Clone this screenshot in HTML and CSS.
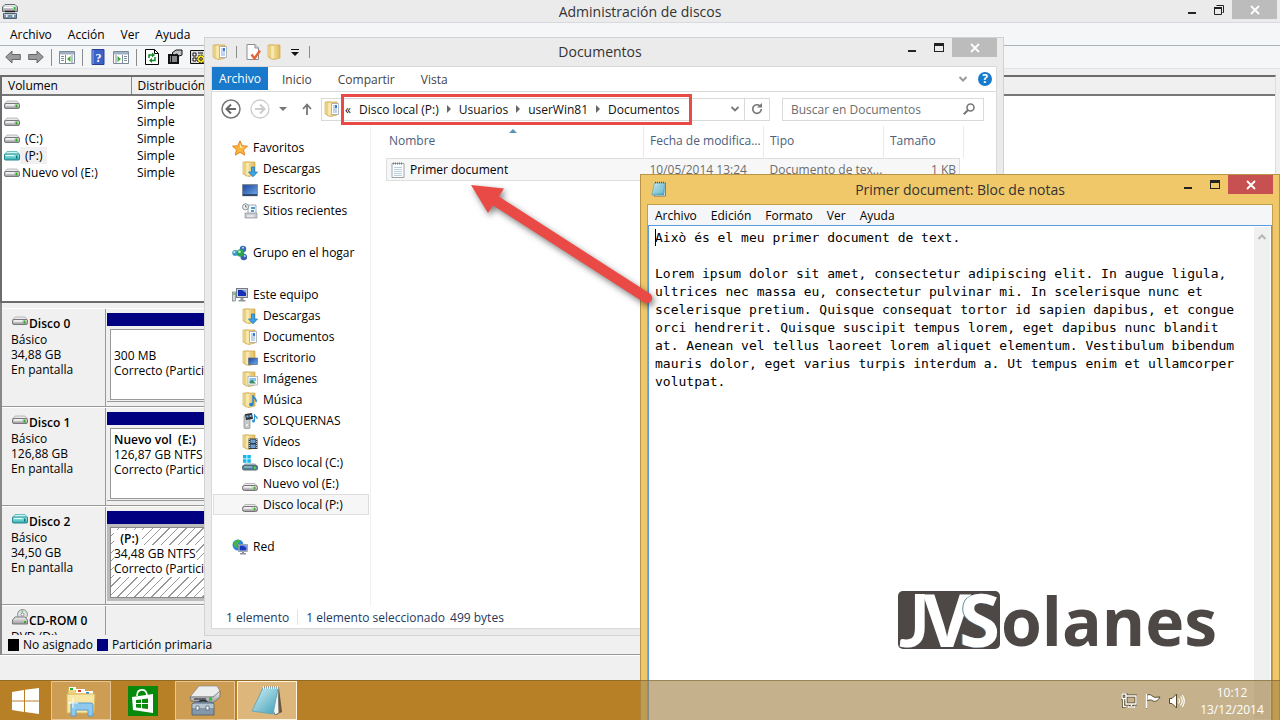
FILE: index.html
```html
<!DOCTYPE html>
<html lang="es">
<head>
<meta charset="utf-8">
<title>Administración de discos</title>
<link rel="stylesheet" href="styles.css">
</head>
<body>
<svg class="defs" aria-hidden="true">
  <defs>
    <linearGradient id="gFolder" x1="0" y1="0" x2="1" y2="0"><stop offset="0" stop-color="#f9ebaf"/><stop offset="1" stop-color="#e0bc5c"/></linearGradient>
    <linearGradient id="gMetal" x1="0" y1="0" x2="0" y2="1"><stop offset="0" stop-color="#f4f4f4"/><stop offset="1" stop-color="#9a9a9e"/></linearGradient>
    <linearGradient id="gTeal" x1="0" y1="0" x2="0" y2="1"><stop offset="0" stop-color="#a9f3f3"/><stop offset="1" stop-color="#35a9b0"/></linearGradient>
    <linearGradient id="gScreen" x1="0" y1="0" x2="1" y2="1"><stop offset="0" stop-color="#1d3f9b"/><stop offset="1" stop-color="#6fb0ee"/></linearGradient>
    <linearGradient id="gPad" x1="0" y1="0" x2="1" y2="1"><stop offset="0" stop-color="#d8f1f6"/><stop offset="1" stop-color="#3d9fb8"/></linearGradient>
    <symbol id="drive" viewBox="0 0 16 10"><path d="M3 1h10l2.500 3H.5z" fill="#e9e9eb" stroke="#a4a4a8" stroke-width=".7"/><rect x=".5" y="3.500" width="15" height="5" rx="1.500" fill="url(#gMetal)" stroke="#77777c"/><path d="M2 5h8" stroke="#fff"/><rect x="11.500" y="4.500" width="2" height="3" fill="#32b020"/></symbol>
    <symbol id="driveTeal" viewBox="0 0 16 10"><path d="M3 .5h10l2.500 3H.5z" fill="#c6f7f7" stroke="#3aa3a8" stroke-width=".7"/><rect x=".5" y="3" width="15" height="6" rx="1" fill="url(#gTeal)" stroke="#23878d"/><path d="M2 4.500h8" stroke="#dff"/><rect x="12" y="4.500" width="1.500" height="3" fill="#0c7a74"/></symbol>
    <symbol id="folder" viewBox="0 0 16 16"><path d="M1 1h6v14l-6-2z" fill="#f6e39b" stroke="#cfae58" stroke-width=".7"/><path d="M3 1h10v13l-6 1.500-4-1z" fill="url(#gFolder)" stroke="#cfa64b" stroke-width=".7"/><path d="M6 2v12" stroke="#fdf4c8"/></symbol>
    <symbol id="folderDoc" viewBox="0 0 16 16"><use href="#folder"/><path d="M7.500 2.500h7v11h-7z" fill="#fff" stroke="#a0a6ad" stroke-width=".8"/><path d="M9 5h4M9 7h4M9 9h4M9 11h4" stroke="#7fa9d8"/><rect x="11" y="4" width="2" height="3" fill="#3a7ed2"/></symbol>
    <symbol id="folderDown" viewBox="0 0 16 16"><use href="#folder"/><path d="M9.500 6h3v5h3L11 15.800 6.500 11h3z" fill="#39a5ea" stroke="#1c71b4" stroke-width=".7"/></symbol>
    <symbol id="folderDesk" viewBox="0 0 16 16"><use href="#folder"/><rect x="6.500" y="8" width="9" height="6.500" fill="url(#gScreen)" stroke="#5b6e85" stroke-width=".7"/></symbol>
    <symbol id="folderPic" viewBox="0 0 16 16"><use href="#folder"/><rect x="6" y="5.500" width="9.500" height="8.500" fill="#fff" stroke="#96a3ae" stroke-width=".7"/><path d="M7.500 7h6.500v3H7.500z" fill="#7cc2ee"/><path d="M7.500 10l3-1 3.500 3.500H7.500z" fill="#3a8b6b"/></symbol>
    <symbol id="folderMusic" viewBox="0 0 16 16"><use href="#folder"/><path d="M11 3v9M11 4c1 2.500 4 2.500 3 6" fill="none" stroke="#2186d2" stroke-width="1.500"/><ellipse cx="9.300" cy="12.500" rx="2.300" ry="1.800" fill="#2186d2"/></symbol>
    <symbol id="folderVideo" viewBox="0 0 16 16"><use href="#folder"/><rect x="6.500" y="4.500" width="9" height="10.500" fill="#303a44"/><path d="M8.500 5.500h5v3.500h-5zM8.500 10.500h5v3.500h-5z" fill="#6b9fd2"/><path d="M7.300 5v10M14.700 5v10" stroke="#dce3e8" stroke-dasharray="1 1"/></symbol>
    <symbol id="star" viewBox="0 0 16 16"><path d="M8 .8l2.200 4.900 5.300.5-4 3.600 1.200 5.300L8 12.400l-4.700 2.700 1.200-5.300-4-3.600 5.300-.5z" fill="#fbb53a" stroke="#e2852a"/><path d="M8 3.500l1.300 3.200 3 .3-4.300 1z" fill="#fff0a8"/></symbol>
    <symbol id="desk" viewBox="0 0 16 16"><rect x=".7" y="2.700" width="14.600" height="11" fill="url(#gScreen)" stroke="#6d7a88"/><path d="M1 13h14" stroke="#25344e" stroke-width="1.500"/></symbol>
    <symbol id="recent" viewBox="0 0 16 16"><path d="M6 2h8v10H6z" fill="#f6f8fa" stroke="#8d979f" stroke-width=".8"/><path d="M9 5h4M9 8h3" stroke="#4f9bd8" stroke-width="2"/><path d="M3 10h12v5H3z" fill="#c6cace" stroke="#8f979d" stroke-width=".7"/><path d="M5 13h7" stroke="#fff"/><circle cx="3.500" cy="3.800" r="3" fill="#eef3f5" stroke="#87939b"/><path d="M3.500 2v2H5" fill="none" stroke="#53626c" stroke-width=".8"/></symbol>
    <symbol id="group" viewBox="0 0 16 16"><circle cx="11" cy="4" r="3.200" fill="#376bb9"/><circle cx="3.200" cy="8" r="3" fill="#3d9bd0"/><circle cx="11.800" cy="12" r="3.300" fill="#3a5cb6"/><circle cx="8.500" cy="8" r="3.800" fill="#2aa450"/><circle cx="7.500" cy="6.700" r="1.300" fill="#c6f2ba"/><circle cx="11" cy="2.700" r="1" fill="#bdd8f8"/><circle cx="12.800" cy="11" r="1" fill="#cbd9fb"/><circle cx="2.400" cy="7" r="1" fill="#d4f2fb"/></symbol>
    <symbol id="pc" viewBox="0 0 16 16"><rect x=".5" y="5" width="3" height="9" fill="#d5d8db" stroke="#74797f" stroke-width=".7"/><rect x="1.500" y="6" width="1" height="2" fill="#25ab3c"/><rect x="4.500" y="1.500" width="11" height="9" fill="#c9ccd2" stroke="#777d86"/><rect x="6" y="3" width="8" height="6" fill="#172fb4"/><path d="M10 3h4v3z" fill="#79a4f5"/><path d="M8.500 11h3v2h2v1.500h-7V13h2z" fill="#92979d"/></symbol>
    <symbol id="net" viewBox="0 0 16 16"><circle cx="6" cy="6" r="5.500" fill="#2c87dd"/><path d="M2 3c2-2.500 5-3 6-1L6 5 5 9 2 7zM7 7l4-2v3z" fill="#42b54c"/><rect x="6.500" y="5.500" width="9" height="7" fill="#d2d7dc" stroke="#858c94" stroke-width=".7"/><rect x="7.500" y="6.500" width="7" height="5" fill="#1737bd"/><path d="M11 6.500h3.500V9z" fill="#729cf6"/><path d="M10 13h2v1h2v1.500H8V14h2z" fill="#8b9299"/></symbol>
    <symbol id="media" viewBox="0 0 16 16"><rect x="2" y="2" width="6" height="13.500" rx="1" fill="#c6c9cc" stroke="#85898d" stroke-width=".7"/><path d="M3 1l7-1 1 6-7 1z" fill="#2f353d"/><path d="M4.500 2.500h2v2h-2zM7.500 2h2v2h-2z" fill="#84b5e0"/><path d="M12.500 1v7M12.500 2c1 2 3 1.500 2.500 4" fill="none" stroke="#2b93d6" stroke-width="1.200"/><circle cx="11.500" cy="8" r="1.500" fill="#2b93d6"/><circle cx="5" cy="12" r="1" fill="#f8f8f8"/></symbol>
    <symbol id="drv" viewBox="0 0 16 16"><path d="M3 7.500h10l2.500 3H.5z" fill="#ececee" stroke="#a0a0a4" stroke-width=".7"/><rect x=".5" y="9.500" width="15" height="5" rx="2" fill="url(#gMetal)" stroke="#727277"/><path d="M2.500 11h7" stroke="#fff"/><rect x="11.800" y="10.700" width="1.600" height="2.600" fill="#32b020"/></symbol>
    <symbol id="drvWin" viewBox="0 0 16 16"><path d="M1 0h3.500v3.500H1zM5.300 0h3.500v3.500H5.300zM1 4.300h3.500v3.500H1zM5.300 4.300h3.500v3.500H5.300z" fill="#12b9ee"/><path d="M3 8.500h10l2.500 2.500H.5z" fill="#8fa9ba"/><rect x=".5" y="10.500" width="15" height="4.500" rx="1.500" fill="#4e8198" stroke="#5b6770"/><path d="M2 12h8" stroke="#b7d5e2"/><rect x="12" y="11.500" width="1.600" height="2.500" fill="#4be34c"/></symbol>
    <symbol id="pad" viewBox="0 0 16 16"><path d="M14.500 1.500V15H3z" fill="#fff" stroke="#5d6366" stroke-width=".8"/><path d="M3.500 2H14L13 14H.8z" fill="url(#gPad)" stroke="#5d9cab" stroke-width=".6"/><path d="M3 7h9M2.500 9h9.500M2 11h10" stroke="#a8dbe6" stroke-width=".7"/><path d="M4 1.500h10" stroke="#4a5457" stroke-width="1.500" stroke-dasharray="1 1"/></symbol>
    <symbol id="txt" viewBox="0 0 16 16"><path d="M2 1.500h12v14H2z" fill="#fbfdfe" stroke="#909ca3" stroke-width=".9"/><path d="M4 5.500h8M4 7.500h8M4 9.500h8M4 11.500h8M4 13.500h8" stroke="#a9c3d0" stroke-width=".8"/><path d="M3 1.500h10" stroke="#6c7a82" stroke-width="2" stroke-dasharray="1 1"/></symbol>
    <symbol id="diskmgr" viewBox="0 0 32 32"><path d="M10 1h18l3 5-6 6H1z" fill="#eceded" stroke="#85878b" stroke-width=".7"/><path d="M1 12l23 0 7-6v6l-7 6-22-2z" fill="url(#gMetal)" stroke="#606368" stroke-width=".7"/><path d="M5 14h12" stroke="#4b4e53" stroke-width="1.500"/><path d="M20 12.500h3v3h-3z" fill="#1ec92c"/><path d="M9 20c1-6 9-6 10 0" fill="none" stroke="#2d343c" stroke-width="2"/><path d="M3 19l3-2h16l3 2v11H3z" fill="#8598ab" stroke="#4b5b6b" stroke-width=".8"/><path d="M3.500 19h21v4h-21z" fill="#b7c5d1"/><path d="M7 21h3v4H7zM17 21h3v4h-3z" fill="#f2f5f7" stroke="#4b5b6b" stroke-width=".7"/></symbol>
    <symbol id="diskmgrSmall" viewBox="0 0 16 16"><path d="M3 1.500h10l2.500 2.500v4.500H.5V4z" fill="url(#gMetal)" stroke="#66696e"/><path d="M2 4.500h9" stroke="#fff"/><path d="M12 4h1.500v2.500H12z" fill="#1ec92c"/><path d="M3 8.500h10" stroke="#222" stroke-width="1.500"/><path d="M1.500 10.500h13v5h-13z" fill="#7890a6" stroke="#4c6072"/><path d="M2 11.500h12" stroke="#becbd6"/><path d="M4 12h1.500v2H4zM10.500 12H12v2h-1.500z" fill="#fff"/></symbol>
    <symbol id="cross" viewBox="0 0 10 10"><path d="M1 1l8 8M9 1l-8 8" stroke="#fff" stroke-width="1.800"/></symbol>
    <symbol id="min" viewBox="0 0 10 10"><path d="M1 7h8v2H1z" fill="#222"/></symbol>
    <symbol id="max" viewBox="0 0 10 10"><path d="M0 0h10v9H0zM1 3v5h8V3z" fill="#222" fill-rule="evenodd"/></symbol>
    <symbol id="restore" viewBox="0 0 10 10"><path d="M2.500 .5h7v7H8.500M.5 2.500h7v7h-7z" fill="none" stroke="#222"/><path d="M0 3h8" stroke="#222" stroke-width="2"/></symbol>
    <symbol id="crumb" viewBox="0 0 6 8"><path d="M1 0l4 4-4 4z" fill="#666"/></symbol>
  </defs>
</svg>

<main class="desktop">
  <section class="disks" aria-label="Administración de discos">
    <header class="titlebar">
      <svg class="app"><use href="#diskmgrSmall"/></svg>
      <h1>Administración de discos</h1>
      <div class="caps">
        <button aria-label="Minimizar"><svg><use href="#min"/></svg></button><button aria-label="Restaurar"><svg><use href="#restore"/></svg></button><button class="close" aria-label="Cerrar"><svg><use href="#cross"/></svg></button>
      </div>
    </header>
    <nav class="menu wide"><button>Archivo</button><button>Acción</button><button>Ver</button><button>Ayuda</button></nav>
    <div class="toolbar">
      <button aria-label="Atrás"><svg viewBox="0 0 16 16"><path d="M.7 8L7 2v3.500h8.300v5H7V14z" fill="#9b9b9b" stroke="#666"/></svg></button>
      <button aria-label="Adelante"><svg viewBox="0 0 16 16"><path d="M15.300 8L9 2v3.500H.7v5H9V14z" fill="#9b9b9b" stroke="#666"/></svg></button>
      <i class="rule"></i>
      <button aria-label="Árbol de consola"><svg viewBox="0 0 16 16"><path d="M.5 2.500h15v12H.5z" fill="#fff" stroke="#7d8b99"/><path d="M1 3h14v2.500H1z" fill="#9fb0c2"/><path d="M2 7.500h3M2 9.500h3M2 11.500h3M6.500 6v8M13 6v8" stroke="#7d8b99"/><path d="M11.500 7v6L8 10z" fill="#3cab32"/></svg></button>
      <i class="rule"></i>
      <button aria-label="Ayuda"><svg viewBox="0 0 16 16"><path d="M2 .5h12v15H2z" fill="#3c62c8" stroke="#2a3f91"/><path d="M3 1v14" stroke="#8fa9ef"/><text x="8.500" y="13" text-anchor="middle" class="qmark">?</text></svg></button>
      <button aria-label="Panel de acciones"><svg viewBox="0 0 16 16"><path d="M.5 2.500h15v12H.5z" fill="#fff" stroke="#7d8b99"/><path d="M1 3h14v2.500H1z" fill="#9fb0c2"/><path d="M11 7.500h3M11 9.500h3M11 11.500h3M9.500 6v8M3 6v8" stroke="#7d8b99"/><path d="M4.500 7v6L8 10z" fill="#3cab32"/></svg></button>
      <i class="rule"></i>
      <button aria-label="Actualizar"><svg viewBox="0 0 16 16"><path d="M1.500.5h9l4 4v11h-13z" fill="#fff" stroke="#000"/><path d="M10.500.5v4h4" fill="none" stroke="#000"/><path d="M5 9V6h4M11 8v3.500H7" fill="none" stroke="#12882a" stroke-width="1.500"/><path d="M8 3.500L11 6 8 8.500zM8 9l-3 2.500L8 14z" fill="#12882a"/></svg></button>
      <button aria-label="Propiedades"><svg viewBox="0 0 16 16"><path d="M1 5h11v10H1z" fill="#111"/><path d="M3 8h1M5 8h5M3 10h1M5 10h5M3 12h1M5 12h5" stroke="#fff"/><path d="M5 4l4-3h6v5l-3 1-2-2-3 1z" fill="#c3c3c3" stroke="#111"/></svg></button>
      <button aria-label="Configuración"><svg viewBox="0 0 16 16"><path d="M.5 1.500h15v13H.5z" fill="#ddd" stroke="#111"/><path d="M3 4h3v3H3zM3 9h3v3H3zM8 4h5" fill="#fff" stroke="#111"/><circle cx="11" cy="10" r="4" fill="#f4df19" stroke="#111" stroke-dasharray="2 1"/><circle cx="11" cy="10" r="1.300" fill="#fff" stroke="#111"/></svg></button>
    </div>
    <div class="volumes">
      <table>
        <thead><tr><th class="vname">Volumen</th><th>Distribución</th></tr></thead>
        <tbody>
          <tr><td><svg><use href="#drive"/></svg></td><td>Simple</td></tr>
          <tr><td><svg><use href="#drive"/></svg></td><td>Simple</td></tr>
          <tr><td><svg><use href="#drive"/></svg><span>(C:)</span></td><td>Simple</td></tr>
          <tr><td><svg><use href="#driveTeal"/></svg><span class="picked">(P:)</span></td><td>Simple</td></tr>
          <tr><td><svg><use href="#drive"/></svg><b>Nuevo vol (E:)</b></td><td>Simple</td></tr>
        </tbody>
      </table>
    </div>
    <div class="map">
      <article class="disk">
        <div class="info"><h2><svg><use href="#drive"/></svg>Disco 0</h2><p>Básico</p><p>34,88 GB</p><p>En pantalla</p></div>
        <div class="parts"><div class="part"><p>&nbsp;</p><p>300 MB</p><p>Correcto (Partición primaria)</p></div></div>
      </article>
      <article class="disk">
        <div class="info"><h2><svg><use href="#drive"/></svg>Disco 1</h2><p>Básico</p><p>126,88 GB</p><p>En pantalla</p></div>
        <div class="parts"><div class="part"><p><strong>Nuevo vol &nbsp;(E:)</strong></p><p>126,87 GB NTFS</p><p>Correcto (Partición primaria)</p></div></div>
      </article>
      <article class="disk">
        <div class="info"><h2><svg><use href="#driveTeal"/></svg>Disco 2</h2><p>Básico</p><p>34,50 GB</p><p>En pantalla</p></div>
        <div class="parts"><div class="part hatched"><p><strong>&nbsp; (P:)&nbsp;</strong></p><p><span>34,48 GB NTFS</span></p><p><span>Correcto (Partición primaria)</span></p></div></div>
      </article>
      <article class="disk cd">
        <div class="info"><h2><svg class="cdicon" viewBox="0 0 16 16"><circle cx="10.500" cy="5.500" r="5" fill="#dcdfe1" stroke="#8e9194"/><path d="M10.500 5.500l-2-4.500h3z" fill="#8ed18b"/><circle cx="10.500" cy="5.500" r="1.400" fill="#fff" stroke="#8e9194"/><path d="M3 8h10l2.500 3v4H.5v-4z" fill="url(#gMetal)" stroke="#77777c"/><path d="M12 12h2v2h-2z" fill="#32b020"/></svg>CD-ROM 0</h2><p>DVD (D:)</p></div>
        <div class="blank"></div>
      </article>
    </div>
    <div class="legend"><i class="black"></i><span>No asignado</span><i class="navy"></i><span>Partición primaria</span></div>
    <footer class="diskstatus"></footer>
  </section>

  <section class="explorer" aria-label="Documentos">
    <header class="titlebar">
      <div class="quick">
        <svg><use href="#folderDoc"/></svg><i class="rule"></i>
        <button aria-label="Propiedades"><svg viewBox="0 0 16 16"><path d="M2 .5h8l3.500 3.500v11.500H2z" fill="#fff" stroke="#8a8f94"/><path d="M10 .5V4h3.500" fill="#d9dcde" stroke="#8a8f94"/><path d="M6.500 10.500l3 4 5.500-8" fill="none" stroke="#e4673a" stroke-width="2.500"/></svg></button>
        <button aria-label="Nueva carpeta"><svg><use href="#folder"/></svg></button>
        <button aria-label="Personalizar" class="drop"><svg viewBox="0 0 8 8"><path d="M0 1.500h8" stroke="#111"/><path d="M0 4h8L4 8z" fill="#111"/></svg></button>
        <i class="rule"></i>
      </div>
      <h1>Documentos</h1>
      <div class="caps">
        <button aria-label="Minimizar"><svg><use href="#min"/></svg></button><button aria-label="Maximizar"><svg><use href="#max"/></svg></button><button class="close" aria-label="Cerrar"><svg><use href="#cross"/></svg></button>
      </div>
    </header>
    <div class="frame">
      <nav class="ribbon">
        <button class="file">Archivo</button><button>Inicio</button><button>Compartir</button><button>Vista</button>
        <span class="grow"></span>
        <svg class="chev" viewBox="0 0 10 8"><path d="M1.500 2L5 5.500 8.500 2" fill="none" stroke="#9a9a9a" stroke-width="2"/></svg>
        <button class="help" aria-label="Ayuda">?</button>
      </nav>
      <div class="address">
        <div class="go">
          <button aria-label="Atrás"><svg viewBox="0 0 20 20"><circle cx="10" cy="10" r="9" fill="none" stroke="#777" stroke-width="1.500"/><path d="M15 10H6M10 5.500L5.500 10l4.500 4.500" fill="none" stroke="#666" stroke-width="2"/></svg></button>
          <button aria-label="Adelante"><svg viewBox="0 0 20 20"><circle cx="10" cy="10" r="9" fill="none" stroke="#ccc" stroke-width="1.300"/><path d="M5 10h9M10 5.500l4.500 4.500-4.500 4.500" fill="none" stroke="#ccc" stroke-width="2"/></svg></button>
          <button aria-label="Recientes"><svg class="s8" viewBox="0 0 8 8"><path d="M0 2h8L4 6z" fill="#777"/></svg></button>
          <button aria-label="Subir"><svg class="s12" viewBox="0 0 12 12"><path d="M6 12V2M2 6l4-4.500L10 6" fill="none" stroke="#777" stroke-width="1.800"/></svg></button>
        </div>
        <div class="path">
          <svg class="s16"><use href="#folderDoc"/></svg>
          <div class="crumbs">
            <span class="more">«</span>
            <button>Disco local (P:)</button><svg><use href="#crumb"/></svg>
            <button>Usuarios</button><svg><use href="#crumb"/></svg>
            <button>userWin81</button><svg><use href="#crumb"/></svg>
            <button>Documentos</button>
            <i class="mark"></i>
          </div>
          <span class="grow"></span>
          <svg class="s10" viewBox="0 0 10 8"><path d="M1.500 2L5 5.500 8.500 2" fill="none" stroke="#777" stroke-width="1.800"/></svg>
          <button class="reload" aria-label="Actualizar"><svg viewBox="0 0 12 12"><path d="M9 3a4.300 4.300 0 1 0 1.300 3" fill="none" stroke="#777" stroke-width="1.600"/><path d="M6 4.500h5v-4.500z" fill="#777"/></svg></button>
        </div>
        <label class="search"><input type="text" placeholder="Buscar en Documentos" aria-label="Buscar en Documentos"><svg viewBox="0 0 12 12"><circle cx="7.500" cy="4.500" r="3.500" fill="none" stroke="#777" stroke-width="1.600"/><path d="M5 7L.8 11.200" stroke="#777" stroke-width="2"/></svg></label>
      </div>
      <div class="panes">
        <ul class="tree">
          <li class="top"><svg><use href="#star"/></svg>Favoritos</li>
          <li><svg><use href="#folderDown"/></svg>Descargas</li>
          <li><svg><use href="#desk"/></svg>Escritorio</li>
          <li><svg><use href="#recent"/></svg>Sitios recientes</li>
          <li class="top gap"><svg><use href="#group"/></svg>Grupo en el hogar</li>
          <li class="top gap"><svg><use href="#pc"/></svg>Este equipo</li>
          <li><svg><use href="#folderDown"/></svg>Descargas</li>
          <li><svg><use href="#folderDoc"/></svg>Documentos</li>
          <li><svg><use href="#folderDesk"/></svg>Escritorio</li>
          <li><svg><use href="#folderPic"/></svg>Imágenes</li>
          <li><svg><use href="#folderMusic"/></svg>Música</li>
          <li><svg><use href="#media"/></svg>SOLQUERNAS</li>
          <li><svg><use href="#folderVideo"/></svg>Vídeos</li>
          <li><svg><use href="#drvWin"/></svg>Disco local (C:)</li>
          <li><svg><use href="#drv"/></svg>Nuevo vol (E:)</li>
          <li class="current"><svg><use href="#drv"/></svg>Disco local (P:)</li>
          <li class="top gap"><svg><use href="#net"/></svg>Red</li>
        </ul>
        <div class="files">
          <svg class="sort" viewBox="0 0 8 4"><path d="M4 0l4 4H0z" fill="#5a93b5"/></svg>
          <table>
            <thead><tr><th class="c1">Nombre</th><th class="c2">Fecha de modifica...</th><th class="c3">Tipo</th><th class="c4">Tamaño</th></tr></thead>
            <tbody><tr><td class="fname"><svg><use href="#txt"/></svg>Primer document</td><td>10/05/2014 13:24</td><td>Documento de tex...</td><td class="size">1 KB</td></tr></tbody>
          </table>
        </div>
      </div>
      <footer class="count"><span>1 elemento</span><span>1 elemento seleccionado</span><span>499 bytes</span></footer>
    </div>
  </section>

  <section class="notepad" aria-label="Bloc de notas">
    <header class="titlebar">
      <svg class="app"><use href="#pad"/></svg>
      <h1>Primer document: Bloc de notas</h1>
      <div class="caps">
        <button aria-label="Minimizar"><svg><use href="#min"/></svg></button><button aria-label="Maximizar"><svg><use href="#max"/></svg></button><button class="close" aria-label="Cerrar"><svg><use href="#cross"/></svg></button>
      </div>
    </header>
    <div class="sheet">
      <nav class="menu"><button>Archivo</button><button>Edición</button><button>Formato</button><button>Ver</button><button>Ayuda</button></nav>
      <div class="edit">
        <textarea aria-label="Texto" spellcheck="false">Això és el meu primer document de text.

Lorem ipsum dolor sit amet, consectetur adipiscing elit. In augue ligula,
ultrices nec massa eu, consectetur pulvinar mi. In scelerisque nunc et
scelerisque pretium. Quisque consequat tortor id sapien dapibus, et congue
orci hendrerit. Quisque suscipit tempus lorem, eget dapibus nunc blandit
at. Aenean vel tellus laoreet lorem aliquet elementum. Vestibulum bibendum
mauris dolor, eget varius turpis interdum a. Ut tempus enim et ullamcorper
volutpat.</textarea>
        <i class="cursor"></i>
        <div class="bar"><svg viewBox="0 0 10 8"><path d="M1.500 6L5 2.500 8.500 6" fill="none" stroke="#b5b5b5" stroke-width="2"/></svg></div>
      </div>
    </div>
  </section>

  <svg class="arrow" viewBox="0 0 190 130" aria-hidden="true"><g fill="#ea4a45"><path d="M6 10l33 3.500-16 24.500z"/><path d="M31 26l151 97" stroke="#ea4a45" stroke-width="10.500" stroke-linecap="round"/></g></svg>

  <div class="logo"><span class="badge"><span class="j">J</span><span class="v">V</span><span class="s">S</span></span><span>olanes</span></div>

  <footer class="taskbar">
    <button class="start" aria-label="Inicio"><svg viewBox="0 0 28 26"><path d="M0 4l12-2v10.500H0zM13 1.800L27 0v12.500H13zM0 13.500h12V24L0 22zM13 13.500h14V26l-14-2z" fill="#fff"/></svg></button>
    <button class="task open" aria-label="Explorador"><svg viewBox="0 0 32 32"><path d="M3 4h8v3h16l1 20H2z" fill="#f0d683" stroke="#c9a651"/><path d="M4 2h7v3H4z" fill="#fff"/><path d="M5 3h3v2H5z" fill="#28ad37"/><path d="M11 4h9v4h-9z" fill="#fff"/><path d="M13 5h3v2h-3z" fill="#d7412c"/><path d="M20 6h8v4h-8z" fill="#fff"/><path d="M21 7h3v2h-3z" fill="#3588da"/><path d="M2 9h28l-1 19H2z" fill="#f8e7a4" stroke="#d8b55d"/><path d="M6 31V20q0-2 2-2h18q2 0 2 2v11h-5v-6H11v6z" fill="#8fc9ee" stroke="#5b9dcb"/><path d="M8 13v10M3 18h10" stroke="#fff" stroke-width="1"/></svg></button>
    <button class="task" aria-label="Tienda"><svg viewBox="0 0 32 32"><path d="M1 1h30v30H1z" fill="#078a0b"/><path d="M5 12l21-3v19L6 25z" fill="#fff"/><path d="M10 11c0-8 9-8 10-1" fill="none" stroke="#fff" stroke-width="1.600"/><path d="M9 15l5-.6V18H9zM15 14.200l6-.7V18h-6zM9 19h5v4l-5-.6zM15 19h6v5l-6-.8z" fill="#078a0b"/></svg></button>
    <button class="task open" aria-label="Administración de discos"><svg><use href="#diskmgr"/></svg></button>
    <button class="task open active" aria-label="Bloc de notas"><svg viewBox="0 0 32 32"><path d="M28 3l3 24-6 3z" fill="#6c5537"/><path d="M13 2h14l1 26-4 2z" fill="#f5f5f2" stroke="#777"/><path d="M12 3h15l-5 26-21-3z" fill="url(#gPad)" stroke="#6ba7b4"/><path d="M12 2.500h16" stroke="#e9f2f3" stroke-width="3" stroke-dasharray="1 1"/></svg></button>
    <span class="grow"></span>
    <div class="tray">
      <svg viewBox="0 0 16 16"><path d="M5 3h10v8H5zM8 13.500h5M10.500 11v2M2.500 6v7.500H5M1 1h4v4.500H1z" fill="none" stroke="#554a2c" stroke-width="3"/><path d="M5 3h10v8H5zM7 14h7M10.500 11v2M2.500 6v7.500H5M1 1h4v4.500H1z" fill="none" stroke="#fff" stroke-width="1.400"/></svg>
      <svg viewBox="0 0 16 16"><path d="M1.500 1v14.500M2 2c3-1 4 0 6 1.500 2 1.500 4 .5 7 .5-2 4-5 5-7 4-2-1.500-3-1-6-.5z" fill="#fff" stroke="#554a2c" stroke-width="1"/><path d="M1.500 1v14" stroke="#fff" stroke-width="1.300"/></svg>
      <svg viewBox="0 0 16 16"><path d="M.5 5.500H3L7.500 1v14L3 10.500H.5z" fill="#fff" stroke="#554a2c"/><path d="M9.500 5.500q2 2.500 0 5M11.500 3.500q3.500 4.500 0 9M13.300 2q4 6 0 12" fill="none" stroke="#fff" stroke-width="1.200"/></svg>
    </div>
    <time class="clock">10:12<br>13/12/2014</time>
  </footer>
</main>
</body>
</html>
```
FILE: styles.css
```css
* { box-sizing: border-box; }
body { margin: 0; font: 12px/15px "Open Sans", "Noto Sans", sans-serif; color: #000; }
h1, h2, p, ul { margin: 0; padding: 0; }
button { font: inherit; color: inherit; background: none; border: 0; padding: 0; white-space: nowrap; }
svg { display: block; flex: none; width: 16px; height: 16px; }
table { border-collapse: collapse; table-layout: fixed; }
th { font-weight: 400; text-align: left; }
th, td { padding: 0; white-space: nowrap; }
.defs { position: absolute; width: 0; height: 0; }
.grow { flex: 1; }
.desktop { position: relative; height: 100vh; min-height: 640px; overflow: hidden; background: #df8200; }

/* Shared window parts */
.titlebar { position: relative; display: flex; align-items: flex-start; justify-content: space-between; background: #ebebeb; }
.titlebar h1 { position: absolute; inset: 0 0 auto; text-align: center; font-size: 14px; line-height: 24px; font-weight: 400; color: #333; pointer-events: none; }
.caps { display: flex; margin-left: auto; }
.caps button { display: flex; align-items: center; justify-content: center; width: 27px; height: 19px; padding-top: 1px; }
.caps svg { width: 10px; height: 10px; }
.caps .close { width: 45px; background: #bcbcbc; }
.menu { display: flex; gap: 14px; padding: 0 7px; height: 19px; align-items: center; background: #f5f6f8; }
.menu.wide { height: 23px; gap: 16px; padding: 0 10px; border-bottom: 1px solid #aab0ba; }
.rule { width: 1px; height: 17px; background: #8c8c8c; }

/* Disk management */
.disks { position: absolute; inset: 0 0 40px; display: flex; flex-direction: column; background: #f0f0f0; }
.disks .titlebar { height: 23px; border-bottom: 1px solid #d8dadf; padding: 0 3px 0 2px; }
.disks .app { margin-top: 3px; }
.toolbar { display: flex; align-items: center; gap: 7px; height: 23px; padding: 0 5px; background: #f5f6f8; border-bottom: 1px solid #e2e4e8; }
.volumes { flex: 0 0 228px; margin: 6px 4px 0 0; border: 2px solid #6c6c6c; border-right: 1px solid #ddd; background: #fff; }
.volumes table { width: 100%; }
.volumes th { height: 18px; padding-left: 6px; background: #f0f0f0; border-bottom: 2px solid #777; }
.volumes .vname { width: 129px; border-right: 1px solid #888; }
.volumes td { height: 17px; padding-left: 6px; }
.volumes td:first-child { display: flex; align-items: center; padding-left: 2px; }
.volumes td svg, .info svg { width: 16px; height: 10px; }
.volumes td span { padding: 0 5px; line-height: 17px; }
.volumes td b { font-weight: 400; padding-left: 2px; }
.picked { background: #f0f0f0; }
.map { flex: 1; min-height: 0; overflow: hidden; padding-top: 5px; border-left: 2px solid #888; }
.disk { display: flex; height: 99px; border-top: 1px solid #fff; border-bottom: 1px solid #999; }
.info { flex: 0 0 104px; padding: 7px 0 0 9px; border-right: 1px solid #999; }
.info h2 { display: flex; align-items: flex-start; gap: 1px; padding-left: 1px; font-size: 12px; line-height: 16px; font-weight: 600; }
.parts { flex: 1; min-width: 0; margin: 4px 0 4px 1px; border-top: 13px solid #000080; border-bottom: 1px solid #999; }
.part { height: 71px; margin: 3px 0 0 3px; padding: 3px 0 0 3px; background: #fff; border: 1px solid #999; white-space: nowrap; }
.part strong { font-weight: 600; }
.hatched { border-color: #888; background: repeating-linear-gradient(135deg, #fff 0 5px, #999 5px 6px); box-shadow: 0 0 0 3px #bbb; }
.hatched span, .hatched strong { background: #fff; }
.info .cdicon { height: 16px; margin-top: -4px; }
.legend { display: flex; align-items: center; gap: 4px; height: 20px; padding-left: 6px; border-left: 2px solid #888; border-bottom: 1px solid #999; }
.legend i { width: 11px; height: 12px; }
.legend .black { background: #000; }
.legend .navy { background: #000080; }
.diskstatus { height: 25px; border-top: 1px solid #fff; }
.qmark { font: 700 12px "Liberation Serif", serif; fill: #fff; }

/* Explorer */
.explorer { position: absolute; inset: 37px 276px 84px 204px; display: flex; flex-direction: column; padding: 0 6px 6px; background: #ebebeb; border: 1px solid #d2d2d2; }
.explorer .titlebar { height: 28px; }
.explorer .titlebar h1 { line-height: 28px; padding-right: 8px; }
.quick { display: flex; align-items: center; height: 28px; gap: 6px; }
.quick svg { margin: 0 2px 0 1px; }
.quick button svg { margin: 0; }
.quick .rule { height: 12px; margin: 0 2px 0 0; }
.quick button + .rule { margin-left: 4px; }
.quick .drop { margin-left: 2px; }
.quick .drop svg { width: 8px; height: 8px; }
.frame { flex: 1; min-height: 0; display: flex; flex-direction: column; background: #fff; border: 1px solid #d9d9d9; }
.ribbon { display: flex; align-items: center; height: 25px; border-bottom: 1px solid #dadbdc; color: #444; padding-right: 4px; }
.ribbon button { margin-right: 26px; }
.ribbon .file { width: 56px; height: 23px; margin: 0 14px 2px 0; color: #fff; background: #1979ca; }
.ribbon .chev { width: 10px; height: 8px; margin-right: 10px; }
.ribbon .help { width: 14px; height: 14px; margin: 0; border-radius: 50%; background: #1979ca; color: #fff; font-weight: 700; line-height: 14px; }
.address { display: flex; align-items: center; height: 34px; padding: 0 12px 0 9px; gap: 12px; color: #111; }
.go { display: flex; align-items: center; gap: 9px; margin-right: -4px; }
.go svg { width: 20px; height: 20px; }
.go .s8 { width: 8px; height: 8px; }
.go .s12 { width: 12px; height: 14px; margin-left: 5px; }
.path { flex: 1; display: flex; align-items: center; height: 23px; padding-left: 2px; border: 1px solid #d9d9d9; }
.crumbs { position: relative; display: flex; align-items: center; gap: 7px; margin-left: 5px; }
.crumbs svg { width: 6px; height: 8px; }
.crumbs .more { margin-right: 1px; }
.mark { position: absolute; inset: -8px -12px -8px -4px; border: 3px solid #ea4a45; pointer-events: none; }
.s10 { width: 10px; height: 8px; margin-right: 4px; }
.reload { display: flex; align-items: center; justify-content: center; width: 25px; height: 21px; border-left: 1px solid #d9d9d9; }
.reload svg, .search svg { width: 12px; height: 12px; }
.search { flex: 0 0 202px; display: flex; align-items: center; height: 23px; padding: 0 8px; border: 1px solid #d9d9d9; }
.search input { flex: 1; min-width: 0; font: inherit; border: 0; padding: 0; outline: 0; background: none; }
.search input::placeholder { color: #6d6d6d; opacity: 1; }
.panes { flex: 1; min-height: 0; display: flex; }
.tree { flex: 0 0 159px; list-style: none; padding: 11px 1px 0; border-right: 1px solid #f0f0f0; }
.tree li { display: flex; align-items: center; gap: 5px; height: 21px; padding-left: 28px; border: 1px solid transparent; }
.tree .top { padding-left: 18px; }
.tree .gap { margin-top: 21px; }
.tree .current { background: #f6f6f6; border-color: #dedede; }
.files { position: relative; flex: 1; padding: 0 36px 0 15px; }
.files table { width: 100%; }
.files th { position: relative; height: 32px; padding: 0 0 3px 6px; color: #4c607a; border-right: 1px solid #e3ecf4; }
.files th.c1 { padding-left: 3px; }
.files th.c4 { border-right: 0; }
.files th.c4::after { content: ""; position: absolute; inset: 0 -4px 0 auto; border-right: 1px solid #e3ecf4; }
.c2, .c3 { width: 120px; }
.c4 { width: 76px; }
.files td { height: 23px; padding-left: 6px; color: #6d6d6d; background: #f7f7f7; border-top: 1px solid #dedede; border-bottom: 1px solid #dedede; }
.files td.fname { display: flex; align-items: center; gap: 4px; padding-left: 3px; color: #000; border-left: 1px solid #dedede; }
.files td.size { text-align: right; padding-right: 3px; border-right: 1px solid #dedede; }
.sort { position: absolute; left: 138px; top: 3px; width: 8px; height: 4px; }
.count { display: flex; align-items: center; height: 22px; padding-left: 14px; color: #1e395b; }
.count span:first-child { padding-right: 8px; margin-right: 8px; border-right: 1px solid #e4e4e4; }
.count span:last-child { margin-left: 5px; }

/* Notepad */
.notepad { position: absolute; inset: 174px 0 0 50%; display: flex; flex-direction: column; padding: 0 6px 0; background: #f0c869; border: 1px solid #b8944a; border-bottom: 0; }
.notepad .titlebar { height: 29px; background: none; }
.notepad .titlebar h1 { line-height: 29px; }
.notepad .app { margin: 6px 0 0 4px; }
.notepad .close { background: #c75050; }
.sheet { flex: 1; min-height: 0; display: flex; flex-direction: column; border: 1px solid #c3a04e; border-bottom: 0; background: #f5f6f8; }
.sheet .menu { height: 20px; }
.edit { position: relative; flex: 1; display: flex; padding: 1px; background: #fff; border: 1px solid #569de5; border-bottom: 0; }
.edit textarea { flex: 1; min-width: 0; border: 0; outline: 0; resize: none; overflow: hidden; white-space: pre; padding: 2px 5px; font: 13px/18px "DejaVu Sans Mono", "Liberation Mono", monospace; color: #000; background: none; }
.cursor { position: absolute; left: 6px; top: 3px; width: 1px; height: 17px; background: #000; }
.bar { flex: 0 0 16px; padding: 6px 3px; background: #f0f0f0; }
.bar svg { width: 10px; height: 8px; }

.arrow { position: absolute; left: 465px; top: 175px; width: 190px; height: 130px; filter: drop-shadow(2px 3px 3px rgba(0, 0, 0, .5)); }
.logo { position: absolute; right: 63px; bottom: 70px; display: flex; align-items: center; gap: 1px; font-size: 66px; line-height: 60px; font-weight: 700; color: #4d4846; }
.badge { position: relative; width: 102px; height: 58px; font-size: 74px; line-height: 56px; border-radius: 5px; background: #4d4846; color: #fff; overflow: hidden; }
.badge span { position: absolute; top: 0; }
.badge .j { left: 1px; font-family: Lato, "Open Sans", sans-serif; font-size: 72px; }
.badge .v { left: 25px; }
.badge .s { right: 0; text-shadow: -1px 0 #5b8ca5; }

/* Taskbar */
.taskbar { position: absolute; inset: auto 0 0; display: flex; align-items: center; height: 40px; background: rgba(158, 127, 63, .6); border-top: 1px solid rgba(110, 85, 35, .5); color: #fff; }
.start { width: 51px; display: flex; justify-content: center; }
.start svg { width: 28px; height: 26px; }
.task { display: flex; align-items: center; justify-content: center; width: 60px; height: 39px; margin-right: 2px; border: 1px solid transparent; }
.task svg { width: 32px; height: 32px; }
.task.open { background: rgba(255, 225, 190, .3); border-color: rgba(255, 240, 215, .5); }
.task.active { background: rgba(255, 235, 205, .5); border-color: #fff4e2; }
.tray { display: flex; gap: 8px; }
.clock { width: 94px; margin-right: 1px; text-align: center; line-height: 17px; }
```
